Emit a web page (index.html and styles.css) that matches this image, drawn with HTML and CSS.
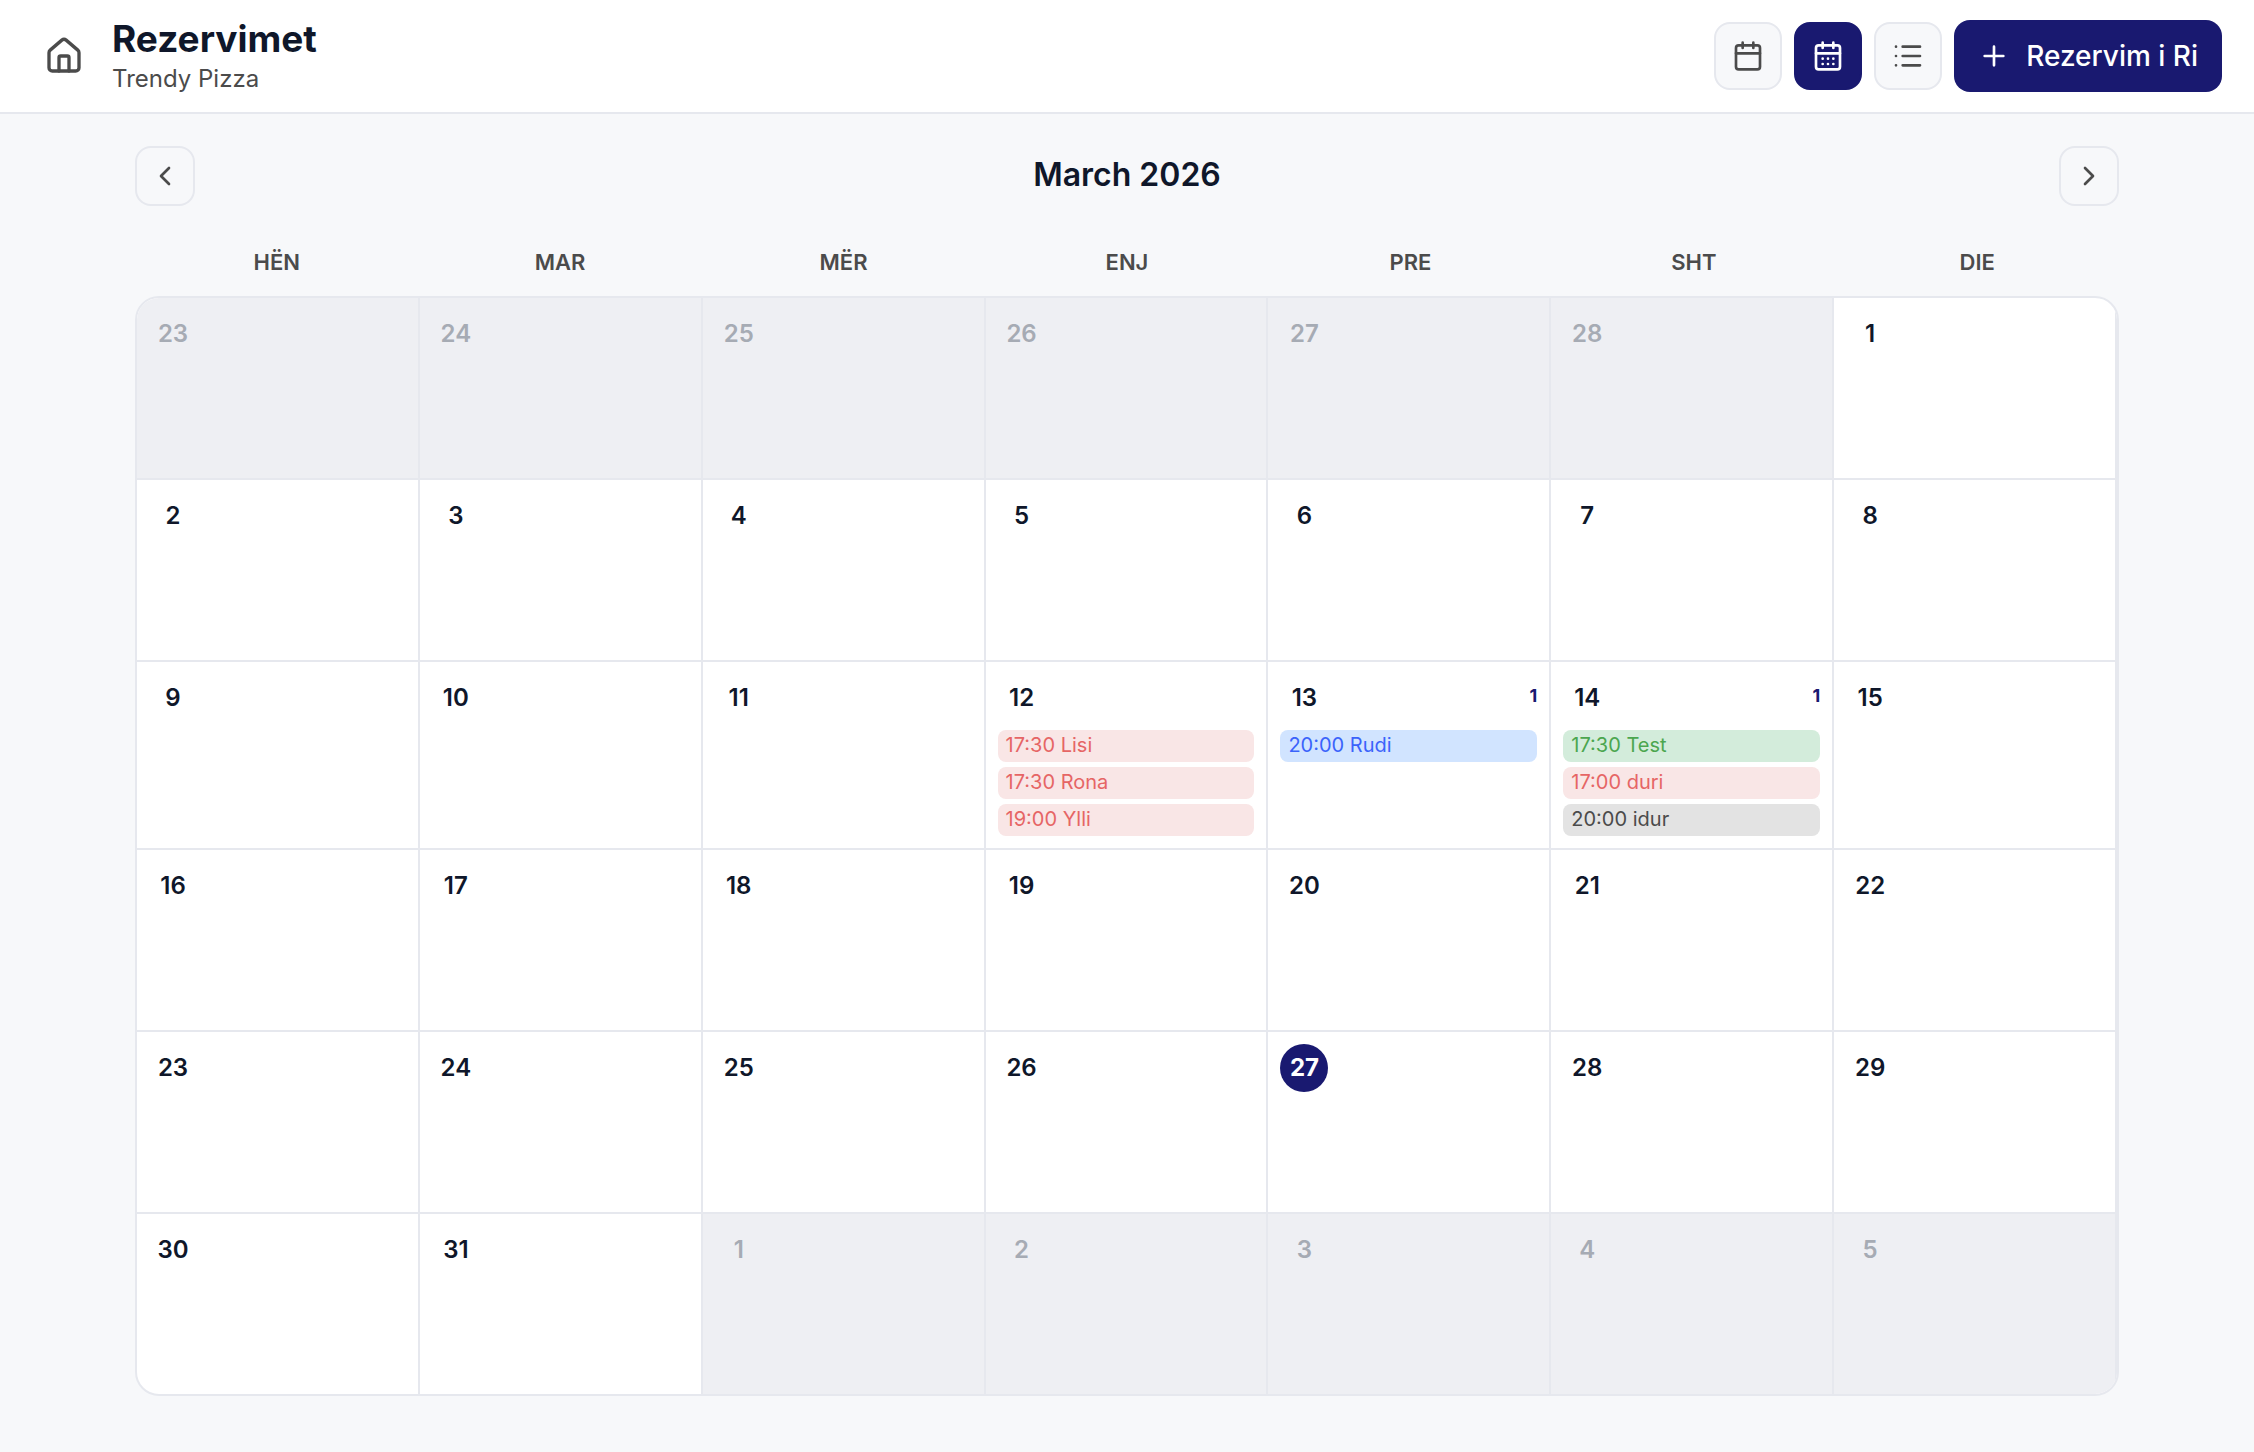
FILE: index.html
```html
<!DOCTYPE html>
<html lang="sq">
<head>
<meta charset="utf-8">
<meta name="viewport" content="width=device-width, initial-scale=1">
<title>Rezervimet</title>
<link rel="stylesheet" href="styles.css">
</head>
<body>
<header class="topbar">
  <a class="home" href="#" aria-label="Kreu">
    <svg class="icon icon-large" viewBox="0 0 24 24"><path d="M15 21v-8a1 1 0 0 0-1-1h-4a1 1 0 0 0-1 1v8"/><path d="M3 10a2 2 0 0 1 .709-1.528l7-6a2 2 0 0 1 2.582 0l7 6A2 2 0 0 1 21 10v9a2 2 0 0 1-2 2H5a2 2 0 0 1-2-2z"/></svg>
  </a>
  <div class="heading">
    <h1 class="title">Rezervimet</h1>
    <p class="subtitle">Trendy Pizza</p>
  </div>
  <div class="actions">
    <button class="view" type="button" aria-label="Dita">
      <svg class="icon" viewBox="0 0 24 24"><path d="M8 2v4M16 2v4M3 10h18"/><rect x="3" y="4" width="18" height="18" rx="2"/></svg>
    </button>
    <button class="view view-active" type="button" aria-label="Muaji">
      <svg class="icon" viewBox="0 0 24 24"><path d="M8 2v4M16 2v4M3 10h18"/><rect x="3" y="4" width="18" height="18" rx="2"/><path d="M8 14h.01M12 14h.01M16 14h.01M8 18h.01M12 18h.01M16 18h.01"/></svg>
    </button>
    <button class="view" type="button" aria-label="Lista">
      <svg class="icon" viewBox="0 0 24 24"><path d="M3 5h.01M3 12h.01M3 19h.01M8 5h13M8 12h13M8 19h13"/></svg>
    </button>
    <button class="create" type="button">
      <svg class="icon" viewBox="0 0 24 24"><path d="M5 12h14M12 5v14"/></svg>
      <span>Rezervim i Ri</span>
    </button>
  </div>
</header>
<main class="page">
  <nav class="month-nav" aria-label="Muaji">
    <button class="step" type="button" aria-label="Muaji i kaluar"><svg class="icon" viewBox="0 0 24 24"><path d="m15 18-6-6 6-6"/></svg></button>
    <h2 class="month">March 2026</h2>
    <button class="step" type="button" aria-label="Muaji tjetër"><svg class="icon" viewBox="0 0 24 24"><path d="m9 18 6-6-6-6"/></svg></button>
  </nav>
  <div class="weekdays">
    <span>HËN</span><span>MAR</span><span>MËR</span><span>ENJ</span><span>PRE</span><span>SHT</span><span>DIE</span>
  </div>
  <div class="calendar">
    <div class="day outside"><span class="number">23</span></div>
    <div class="day outside"><span class="number">24</span></div>
    <div class="day outside"><span class="number">25</span></div>
    <div class="day outside"><span class="number">26</span></div>
    <div class="day outside"><span class="number">27</span></div>
    <div class="day outside"><span class="number">28</span></div>
    <div class="day"><span class="number">1</span></div>

    <div class="day"><span class="number">2</span></div>
    <div class="day"><span class="number">3</span></div>
    <div class="day"><span class="number">4</span></div>
    <div class="day"><span class="number">5</span></div>
    <div class="day"><span class="number">6</span></div>
    <div class="day"><span class="number">7</span></div>
    <div class="day"><span class="number">8</span></div>

    <div class="day"><span class="number">9</span></div>
    <div class="day"><span class="number">10</span></div>
    <div class="day"><span class="number">11</span></div>
    <div class="day">
      <span class="number">12</span>
      <div class="bookings">
        <button class="booking cancelled" type="button">17:30 Lisi</button>
        <button class="booking cancelled" type="button">17:30 Rona</button>
        <button class="booking cancelled" type="button">19:00 Ylli</button>
      </div>
    </div>
    <div class="day">
      <div class="day-head"><span class="number">13</span><span class="count">1</span></div>
      <div class="bookings">
        <button class="booking seated" type="button">20:00 Rudi</button>
      </div>
    </div>
    <div class="day">
      <div class="day-head"><span class="number">14</span><span class="count">1</span></div>
      <div class="bookings">
        <button class="booking confirmed" type="button">17:30 Test</button>
        <button class="booking cancelled" type="button">17:00 duri</button>
        <button class="booking finished" type="button">20:00 idur</button>
      </div>
    </div>
    <div class="day"><span class="number">15</span></div>

    <div class="day"><span class="number">16</span></div>
    <div class="day"><span class="number">17</span></div>
    <div class="day"><span class="number">18</span></div>
    <div class="day"><span class="number">19</span></div>
    <div class="day"><span class="number">20</span></div>
    <div class="day"><span class="number">21</span></div>
    <div class="day"><span class="number">22</span></div>

    <div class="day"><span class="number">23</span></div>
    <div class="day"><span class="number">24</span></div>
    <div class="day"><span class="number">25</span></div>
    <div class="day"><span class="number">26</span></div>
    <div class="day"><span class="number today">27</span></div>
    <div class="day"><span class="number">28</span></div>
    <div class="day"><span class="number">29</span></div>

    <div class="day"><span class="number">30</span></div>
    <div class="day"><span class="number">31</span></div>
    <div class="day outside"><span class="number">1</span></div>
    <div class="day outside"><span class="number">2</span></div>
    <div class="day outside"><span class="number">3</span></div>
    <div class="day outside"><span class="number">4</span></div>
    <div class="day outside"><span class="number">5</span></div>
  </div>
</main>
</body>
</html>
```

FILE: styles.css
```css
:root {
  --navy: #191970;
  --ink: #0f172a;
  --muted: #4b4b4b;
  --line: #e6e8ee;
  --surface: #f7f8fa;
}

* { box-sizing: border-box; }

body {
  margin: 0;
  min-height: 100vh;
  background: var(--surface);
  color: var(--ink);
  font-family: Inter, "Liberation Sans", sans-serif;
}

button {
  font: inherit;
  color: inherit;
  cursor: pointer;
}

h1, h2, p { margin: 0; }

.icon {
  display: block;
  flex: none;
  width: 32px;
  height: 32px;
  fill: none;
  stroke: currentColor;
  stroke-width: 2;
  stroke-linecap: round;
  stroke-linejoin: round;
}

.icon-large {
  width: 40px;
  height: 40px;
}

.topbar {
  display: flex;
  align-items: center;
  gap: 16px;
  padding: 16px 32px;
  background: #fff;
  border-bottom: 2px solid var(--line);
}

.home {
  padding: 12px;
  color: var(--muted);
}

.heading { flex: 1; }

.title {
  font-size: 37px;
  line-height: 46px;
  font-weight: 700;
}

.subtitle {
  color: var(--muted);
  font-size: 24px;
  line-height: 34px;
}

.actions {
  display: flex;
  align-items: center;
  gap: 12px;
}

.view {
  padding: 16px;
  border: 2px solid var(--line);
  border-radius: 16px;
  background: var(--surface);
  color: var(--muted);
}

.view-active {
  border-color: var(--navy);
  background: var(--navy);
  color: #fff;
}

.create {
  display: flex;
  align-items: center;
  gap: 16px;
  padding: 16px 24px;
  border: 0;
  border-radius: 16px;
  background: var(--navy);
  color: #fff;
  font-size: 28px;
  line-height: 40px;
  font-weight: 500;
}

.page {
  max-width: 2048px;
  margin: 0 auto;
  padding: 32px;
}

.month-nav {
  display: flex;
  align-items: center;
  justify-content: space-between;
  margin-bottom: 24px;
}

.step {
  padding: 12px;
  border: 2px solid var(--line);
  border-radius: 16px;
  background: var(--surface);
  color: var(--muted);
}

.month {
  padding-bottom: 2px;
  font-size: 32px;
  line-height: 48px;
  font-weight: 600;
}

.weekdays {
  display: grid;
  grid-template-columns: repeat(7, 1fr);
  padding: 15px 0 17px;
  color: var(--muted);
  font-size: 22px;
  line-height: 34px;
  font-weight: 600;
  text-align: center;
}

.calendar {
  display: grid;
  grid-template-columns: repeat(7, minmax(0, 1fr));
  overflow: hidden;
  border: 2px solid var(--line);
  border-radius: 24px;
  background: #fff;
}

.day {
  min-height: 182px;
  padding: 12px;
  border-right: 2px solid var(--line);
  border-bottom: 2px solid var(--line);
}

.day:nth-last-child(-n+7) {
  min-height: 180px;
  border-bottom: 0;
}

.outside { background: #eeeff3; }

.day-head {
  display: flex;
  align-items: flex-start;
  justify-content: space-between;
}

.number {
  display: flex;
  align-items: center;
  justify-content: center;
  width: 48px;
  height: 48px;
  padding-bottom: 2px;
  border-radius: 50%;
  font-size: 24px;
  font-weight: 600;
}

.outside .number { color: #a6abb4; }

.today {
  background: var(--navy);
  color: #fff;
  font-weight: 700;
}

.count {
  color: var(--navy);
  font-size: 18px;
  line-height: 44px;
  font-weight: 700;
}

.bookings {
  display: grid;
  gap: 5px;
  margin-top: 8px;
}

.booking {
  overflow: hidden;
  padding: 0 8px 2px;
  border: 0;
  border-radius: 8px;
  font-size: 20px;
  line-height: 30px;
  text-align: left;
  text-overflow: ellipsis;
  white-space: nowrap;
}

.cancelled {
  background: #f9e6e6;
  color: #e66565;
}

.seated {
  background: #d1e4ff;
  color: #3b63fb;
}

.confirmed {
  background: #d3ecdb;
  color: #4ba64f;
}

.finished {
  background: #e3e3e3;
  color: #4b4b4b;
}
```
